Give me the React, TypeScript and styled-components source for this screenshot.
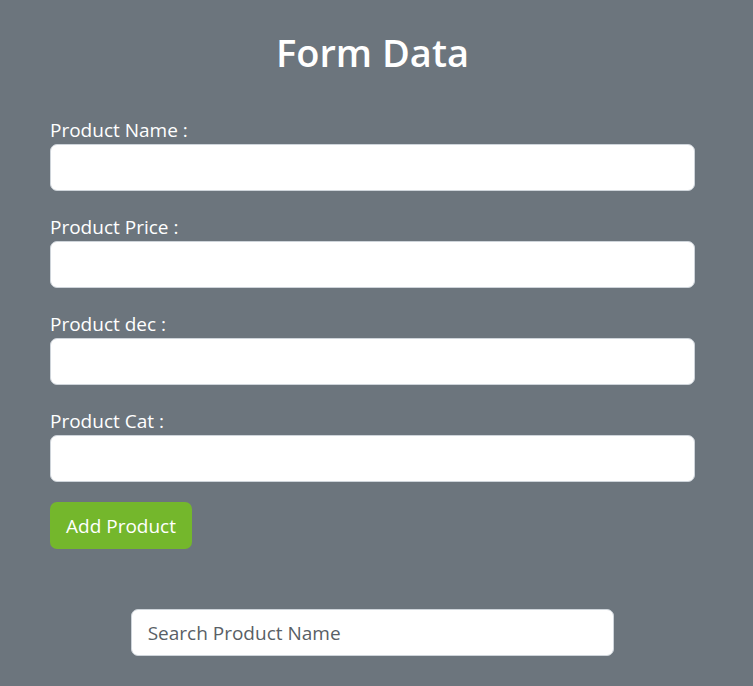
import React from "react";
import styled, { createGlobalStyle } from "styled-components";

const GlobalStyle = createGlobalStyle`
  html, body {
    margin: 0;
    padding: 0;
    background: #6c757d;
  }
  body {
    font-family: "Open Sans", "Noto Sans", Arial, sans-serif;
  }
  * { box-sizing: border-box; }
`;

const Page = styled.div`
  min-height: 686px;
  background: #6c757d;
  padding: 28px 58px 30px 50px;
`;

const Title = styled.h1`
  margin: 0 0 41px;
  text-align: center;
  color: #ffffff;
  font-size: 38px;
  font-weight: 600;
  line-height: 48px;
`;

const Form = styled.form`
  display: flex;
  flex-direction: column;
`;

const Group = styled.div`
  display: flex;
  flex-direction: column;
  margin-bottom: 23px;
`;

const Label = styled.label`
  color: #ffffff;
  font-size: 19px;
  line-height: 26px;
  margin-bottom: 1px;
`;

const Input = styled.input`
  height: 47px;
  width: 100%;
  border: 1px solid #ced4da;
  border-radius: 7px;
  background: #ffffff;
  padding: 0 16px;
  font-family: inherit;
  font-size: 19px;
  outline: none;
`;

const Button = styled.button`
  align-self: flex-start;
  margin-top: -3px;
  height: 47px;
  padding: 0 16px;
  border: none;
  border-radius: 7px;
  background: #74b72c;
  color: #ffffff;
  font-family: inherit;
  font-size: 19px;
  cursor: pointer;
`;

const SearchRow = styled.div`
  display: flex;
  justify-content: center;
  margin-top: 60px;
`;

const Search = styled(Input)`
  width: 75%;
  &::placeholder {
    color: #595f66;
  }
`;

const fields = ["Product Name :", "Product Price :", "Product dec :", "Product Cat :"];

export default function App() {
  return (
    <>
      <GlobalStyle />
      <Page>
        <Title>Form Data</Title>
        <Form onSubmit={(e) => e.preventDefault()}>
          {fields.map((f) => (
            <Group key={f}>
              <Label>{f}</Label>
              <Input type="text" />
            </Group>
          ))}
          <Button type="submit">Add Product</Button>
        </Form>
        <SearchRow>
          <Search type="text" placeholder="Search Product Name" />
        </SearchRow>
      </Page>
    </>
  );
}
